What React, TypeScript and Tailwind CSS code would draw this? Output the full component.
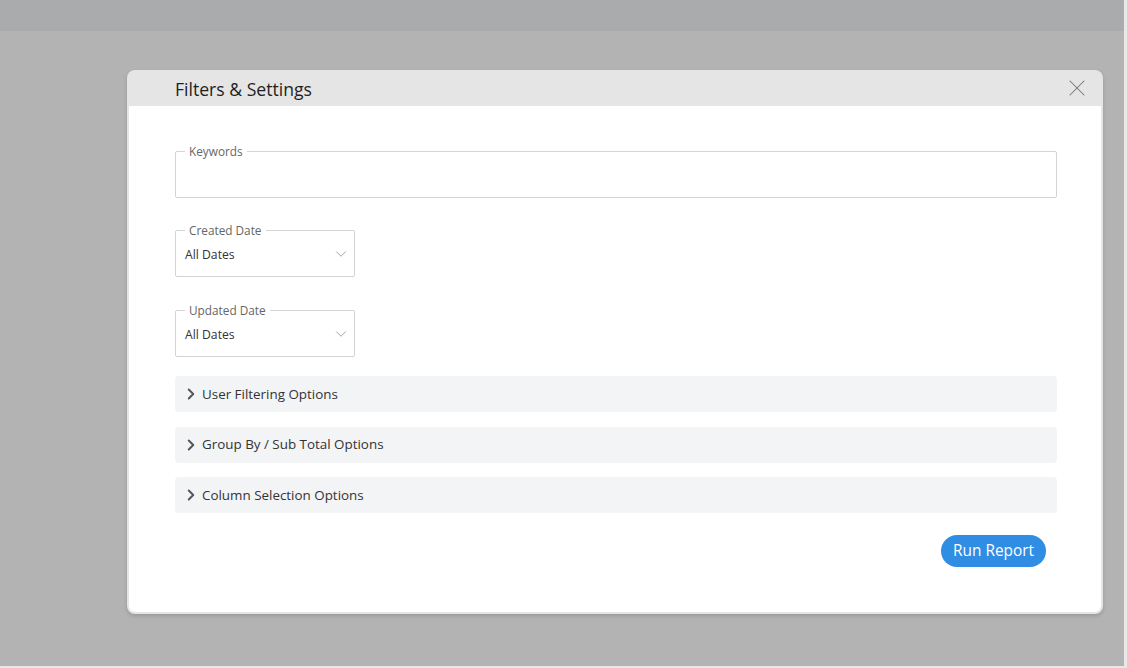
import { ChevronDown, ChevronRight, X } from "lucide-react";

type SelectFieldProps = {
  label: string;
  value: string;
};

function SelectField({ label, value }: SelectFieldProps) {
  return (
    <div className="relative h-[47px] w-[180px] rounded-[2px] border border-[#d4d4d4] bg-white">
      <span className="absolute -top-[9px] left-[9px] bg-white px-[4px] text-[11.8px] leading-[16px] text-[#666]">
        {label}
      </span>
      <div className="flex h-full items-center justify-between pl-[9px] pr-[4px] pt-[3px]">
        <span className="text-[12.2px] text-[#333]">{value}</span>
        <ChevronDown size={18} strokeWidth={1.2} className="-mt-[3px] text-[#9a9a9a]" />
      </div>
    </div>
  );
}

function AccordionRow({ title }: { title: string }) {
  return (
    <div className="flex h-[36px] items-center rounded-[4px] bg-[#f3f4f6] pl-[7px]">
      <ChevronRight size={18} strokeWidth={2.6} className="text-[#555]" />
      <span className="ml-[2px] text-[13.4px] text-[#333]">{title}</span>
    </div>
  );
}

export default function App() {
  const sections = ["User Filtering Options", "Group By / Sub Total Options", "Column Selection Options"];

  return (
    <div
      className="h-[668px] w-full overflow-hidden bg-[#e8e8e8]"
      style={{ fontFamily: '"Open Sans", "Noto Sans", sans-serif' }}
    >
      <div className="h-[666px] w-[1124px] bg-[#b3b3b3]">
        <div className="h-[31px] bg-[#aaabac]" />
        <div className="pl-[127px] pt-[39px]">
          <div className="flex h-[544px] w-[976px] flex-col rounded-[8px] bg-[#e5e5e5] px-[2px] pb-[2px] shadow-[0_2px_4px_rgba(0,0,0,0.15)]">
            <div className="flex h-[36px] items-center justify-between pl-[46px] pr-[10px]">
              <h2 className="pt-[2px] text-[17.6px] text-[#1f1f1f]">Filters &amp; Settings</h2>
              <X size={28} strokeWidth={0.9} className="text-[#777]" />
            </div>
            <div className="flex flex-1 flex-col rounded-b-[6px] bg-white pl-[46px] pr-[44px] pt-[45px]">
              <div className="relative h-[47px] rounded-[2px] border border-[#d4d4d4]">
                <span className="absolute -top-[9px] left-[9px] bg-white px-[4px] text-[11.8px] leading-[16px] text-[#666]">
                  Keywords
                </span>
              </div>

              <div className="mt-[32px]">
                <SelectField label="Created Date" value="All Dates" />
              </div>
              <div className="mt-[33px]">
                <SelectField label="Updated Date" value="All Dates" />
              </div>

              <div className="mt-[19px] flex flex-col gap-[14.5px]">
                {sections.map((s) => (
                  <AccordionRow key={s} title={s} />
                ))}
              </div>

              <div className="mt-[22px] flex justify-end pr-[11px]">
                <button className="h-[32px] rounded-full bg-[#2f8de4] px-[12px] text-[15.4px] text-white">
                  Run Report
                </button>
              </div>
            </div>
          </div>
        </div>
      </div>
    </div>
  );
}
